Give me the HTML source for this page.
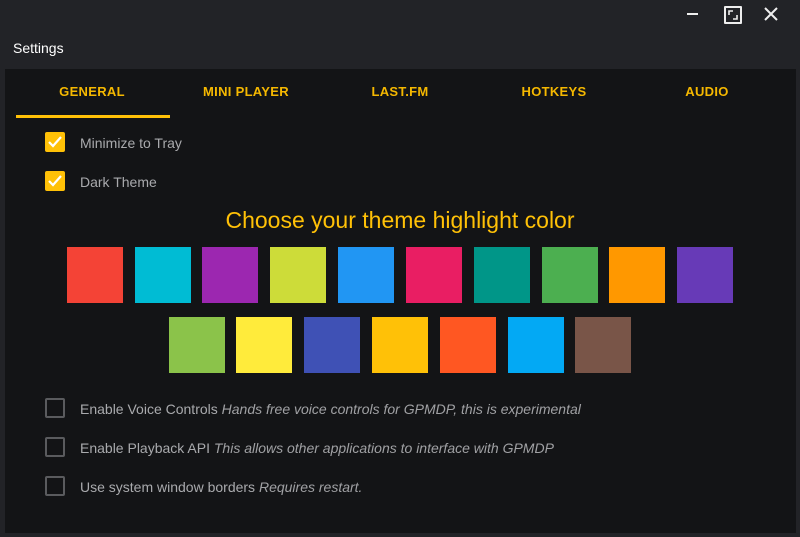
<!DOCTYPE html><html><head><style>
body{margin:0;width:800px;height:537px;background:#222327;font-family:"Liberation Sans",sans-serif;position:relative;overflow:hidden}
.a{position:absolute}
.panel{left:5px;top:69px;width:791px;height:464px;background:#131416}
.tab{top:84px;width:154px;text-align:center;color:#f5b800;font-size:13px;font-weight:bold;letter-spacing:.3px}
.cb{left:45px;width:20px;height:20px;box-sizing:border-box;border-radius:2px}
.on{background:#ffc107}
.off{border:2px solid #5a5b5e}
.lbl{left:80px;font-size:14px;color:#a9aaad}
.lbl i{color:#a0a1a4}
.sw{width:56px;height:56px}
</style></head><body>
<div class="a" style="left:687px;top:13px;width:11px;height:2px;background:#eee"></div>
<div class="a" style="left:724px;top:6px;width:14px;height:14px;border:2px solid #eee;border-radius:1px"></div>
<svg class="a" style="left:724px;top:6px" width="18" height="18"><path d="M5 9V5h4M13 9v4H9" stroke="#eee" stroke-width="1.6" fill="none"/></svg>
<svg class="a" style="left:764px;top:7px" width="14" height="14"><path d="M1 1L13 13M13 1L1 13" stroke="#eee" stroke-width="2"/></svg>
<div class="a" style="left:13px;top:40px;color:#fff;font-size:14px">Settings</div>
<div class="a panel"></div>
<div class="a tab" style="left:15px">GENERAL</div>
<div class="a tab" style="left:169px">MINI PLAYER</div>
<div class="a tab" style="left:323px">LAST.FM</div>
<div class="a tab" style="left:477px">HOTKEYS</div>
<div class="a tab" style="left:630px">AUDIO</div>
<div class="a" style="left:16px;top:115px;width:154px;height:3px;background:#ffc107"></div>
<div class="a cb on" style="top:132px"><svg width="20" height="20"><path d="M4 10l4 4 8-9" stroke="#fff" stroke-width="2.2" fill="none"/></svg></div>
<div class="a lbl" style="top:135px">Minimize to Tray</div>
<div class="a cb on" style="top:171px"><svg width="20" height="20"><path d="M4 10l4 4 8-9" stroke="#fff" stroke-width="2.2" fill="none"/></svg></div>
<div class="a lbl" style="top:174px">Dark Theme</div>
<div class="a" style="left:0;width:800px;top:207px;text-align:center;color:#ffc107;font-size:23px">Choose your theme highlight color</div>
<div class="a sw" style="left:67px;top:247px;background:#f44336"></div>
<div class="a sw" style="left:135px;top:247px;background:#00bcd4"></div>
<div class="a sw" style="left:202px;top:247px;background:#9c27b0"></div>
<div class="a sw" style="left:270px;top:247px;background:#cddc39"></div>
<div class="a sw" style="left:338px;top:247px;background:#2196f3"></div>
<div class="a sw" style="left:406px;top:247px;background:#e91e63"></div>
<div class="a sw" style="left:474px;top:247px;background:#009688"></div>
<div class="a sw" style="left:542px;top:247px;background:#4caf50"></div>
<div class="a sw" style="left:609px;top:247px;background:#ff9800"></div>
<div class="a sw" style="left:677px;top:247px;background:#673ab7"></div>
<div class="a sw" style="left:169px;top:317px;background:#8bc34a"></div>
<div class="a sw" style="left:236px;top:317px;background:#ffeb3b"></div>
<div class="a sw" style="left:304px;top:317px;background:#3f51b5"></div>
<div class="a sw" style="left:372px;top:317px;background:#ffc107"></div>
<div class="a sw" style="left:440px;top:317px;background:#ff5722"></div>
<div class="a sw" style="left:508px;top:317px;background:#03a9f4"></div>
<div class="a sw" style="left:575px;top:317px;background:#795548"></div>
<div class="a cb off" style="top:398px"></div>
<div class="a lbl" style="top:401px">Enable Voice Controls <i>Hands free voice controls for GPMDP, this is experimental</i></div>
<div class="a cb off" style="top:437px"></div>
<div class="a lbl" style="top:440px">Enable Playback API <i>This allows other applications to interface with GPMDP</i></div>
<div class="a cb off" style="top:476px"></div>
<div class="a lbl" style="top:479px">Use system window borders <i>Requires restart.</i></div>
</body></html>
